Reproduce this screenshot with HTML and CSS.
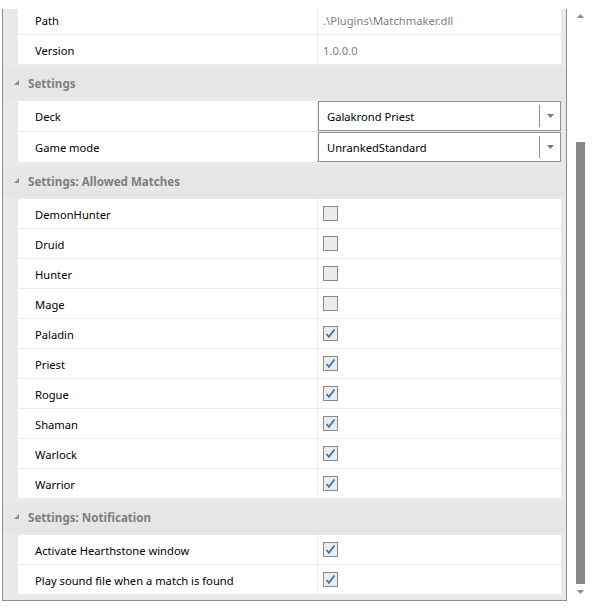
FILE: index.html
```html
<!DOCTYPE html>
<html>
<head>
<meta charset="utf-8">
<title>Plugin settings</title>
<link rel="stylesheet" href="styles.css">
</head>
<body>
<div class="page">
  <div class="left">
    <div class="frame">
      <div class="scroll">
        <div class="rows">
          <div class="row"><div class="label">Path</div><div class="value ro">.\Plugins\Matchmaker.dll</div></div>
          <div class="row"><div class="label">Version</div><div class="value ro">1.0.0.0</div></div>
        </div>

        <div class="cat"><svg class="tri" width="5" height="5" viewBox="0 0 5 5"><polygon points="5,0 5,5 0,5" /></svg><span>Settings</span></div>
        <div class="rows">
          <div class="row combo-row"><div class="label">Deck</div>
            <div class="value"><div class="combo"><span class="combo-text">Galakrond Priest</span><span class="combo-sep"></span><span class="combo-btn"><svg width="7" height="4" viewBox="0 0 7 4"><polygon points="0,0 7,0 3.5,4" /></svg></span></div></div>
          </div>
          <div class="row combo-row"><div class="label">Game mode</div>
            <div class="value"><div class="combo"><span class="combo-text">UnrankedStandard</span><span class="combo-sep"></span><span class="combo-btn"><svg width="7" height="4" viewBox="0 0 7 4"><polygon points="0,0 7,0 3.5,4" /></svg></span></div></div>
          </div>
        </div>

        <div class="cat"><svg class="tri" width="5" height="5" viewBox="0 0 5 5"><polygon points="5,0 5,5 0,5" /></svg><span>Settings: Allowed Matches</span></div>
        <div class="rows">
          <div class="row"><div class="label">DemonHunter</div><div class="value"><span class="cb"></span></div></div>
          <div class="row"><div class="label">Druid</div><div class="value"><span class="cb"></span></div></div>
          <div class="row"><div class="label">Hunter</div><div class="value"><span class="cb"></span></div></div>
          <div class="row"><div class="label">Mage</div><div class="value"><span class="cb"></span></div></div>
          <div class="row"><div class="label">Paladin</div><div class="value"><span class="cb"><svg width="13" height="13" viewBox="0 0 13 13"><polyline points="2.5,7 5,9.8 10.5,2.5" /></svg></span></div></div>
          <div class="row"><div class="label">Priest</div><div class="value"><span class="cb"><svg width="13" height="13" viewBox="0 0 13 13"><polyline points="2.5,7 5,9.8 10.5,2.5" /></svg></span></div></div>
          <div class="row"><div class="label">Rogue</div><div class="value"><span class="cb"><svg width="13" height="13" viewBox="0 0 13 13"><polyline points="2.5,7 5,9.8 10.5,2.5" /></svg></span></div></div>
          <div class="row"><div class="label">Shaman</div><div class="value"><span class="cb"><svg width="13" height="13" viewBox="0 0 13 13"><polyline points="2.5,7 5,9.8 10.5,2.5" /></svg></span></div></div>
          <div class="row"><div class="label">Warlock</div><div class="value"><span class="cb"><svg width="13" height="13" viewBox="0 0 13 13"><polyline points="2.5,7 5,9.8 10.5,2.5" /></svg></span></div></div>
          <div class="row"><div class="label">Warrior</div><div class="value"><span class="cb"><svg width="13" height="13" viewBox="0 0 13 13"><polyline points="2.5,7 5,9.8 10.5,2.5" /></svg></span></div></div>
        </div>

        <div class="cat"><svg class="tri" width="5" height="5" viewBox="0 0 5 5"><polygon points="5,0 5,5 0,5" /></svg><span>Settings: Notification</span></div>
        <div class="rows">
          <div class="row"><div class="label">Activate Hearthstone window</div><div class="value"><span class="cb"><svg width="13" height="13" viewBox="0 0 13 13"><polyline points="2.5,7 5,9.8 10.5,2.5" /></svg></span></div></div>
          <div class="row"><div class="label">Play sound file when a match is found</div><div class="value"><span class="cb"><svg width="13" height="13" viewBox="0 0 13 13"><polyline points="2.5,7 5,9.8 10.5,2.5" /></svg></span></div></div>
        </div>
      </div>
    </div>
  </div>
  <div class="sb">
    <div class="sb-btn sb-up"><svg width="7" height="4" viewBox="0 0 7 4"><polygon points="0,4 3.5,0 7,4" /></svg></div>
    <div class="sb-track"><div class="sb-thumb"></div></div>
    <div class="sb-btn sb-down"><svg width="7" height="4" viewBox="0 0 7 4"><polygon points="0,0 7,0 3.5,4" /></svg></div>
  </div>
</div>
</body>
</html>
```

FILE: styles.css
```css
html, body {
  margin: 0;
  padding: 0;
  background: #ffffff;
}
body {
  font-family: "Noto Sans", "Open Sans", sans-serif;
  font-size: 11.2px;
  color: #000000;
}
.page {
  display: flex;
  height: 610px;
}
.left {
  padding: 9px 0 0 2px;
}
.frame {
  width: 563px;
  height: 591px;
  border-left: 1px solid #8c8c8c;
  border-right: 1px solid #8c8c8c;
  border-bottom: 1px solid #8c8c8c;
  background: #e9e9e9;
  overflow: hidden;
}
.scroll {
  margin-top: -4px;
}
.rows {
  margin: 0 5px 0 15px;
  display: flex;
  flex-direction: column;
}
.row {
  display: grid;
  grid-template-columns: 299px 243px;
  column-gap: 1px;
  height: 29px;
  background: #ebebeb;
  border-bottom: 1px solid #ebebeb;
}
.combo-row {
  height: 30px;
}
.label, .value {
  background: #ffffff;
  display: flex;
  align-items: center;
  white-space: nowrap;
}
.label {
  padding-left: 17px;
  padding-top: 1px;
}
.value {
  padding-left: 5px;
}
.value.ro {
  color: #808080;
  padding-top: 1px;
}
.combo-row .value {
  padding-left: 0;
  align-items: stretch;
}
.combo {
  flex: 1;
  display: flex;
  align-items: center;
  border: 1px solid #8f8f8f;
  background: #ffffff;
}
.combo-text {
  flex: 1;
  padding-left: 8px;
}
.combo-sep {
  width: 1px;
  height: 22px;
  background: #8f8f8f;
}
.combo-btn {
  width: 20px;
  display: flex;
  justify-content: center;
  align-items: center;
}
.combo-btn svg {
  fill: #7a7a7a;
  margin-left: 1px;
}
.cat {
  margin: 4px 0 2px 0;
  height: 30px;
  background: #e6e6e6;
  display: flex;
  align-items: center;
  padding-left: 11px;
  color: #7f7f7f;
  font-weight: bold;
  font-size: 11.6px;
}
.cat span {
  margin-top: -2px;
}
.cat .tri {
  fill: #8e8e8e;
  margin-right: 9px;
  margin-top: -4px;
}
.cb {
  width: 13px;
  height: 13px;
  border: 1px solid #8a8a8a;
  background: #ececec;
  display: flex;
}
.cb svg polyline {
  fill: none;
  stroke: #3478b0;
  stroke-width: 1.8;
}
.sb {
  width: 26px;
  display: flex;
  flex-direction: column;
  align-items: center;
  background: #ffffff;
}
.sb-btn {
  display: flex;
  justify-content: center;
}
.sb-btn svg {
  fill: #8c8c8c;
}
.sb-up {
  height: 32px;
  align-items: center;
}
.sb-track {
  height: 558px;
}
.sb-thumb {
  margin-top: 110px;
  width: 9px;
  height: 442px;
  background: #888888;
}
.sb-down {
  height: 20px;
  align-items: flex-start;
  padding-top: 1px;
}
```
